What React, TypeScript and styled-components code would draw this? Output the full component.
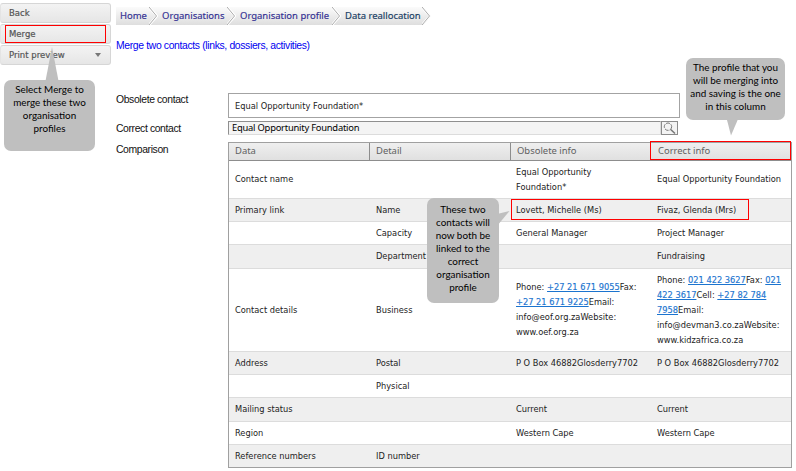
import React from 'react';
import styled, { createGlobalStyle, css } from 'styled-components';

const Global = createGlobalStyle`
  *, *::before, *::after { box-sizing: border-box; }
  body { margin: 0; background: #fff; overflow: hidden; }
`;

const Page = styled.div`
  position: relative;
  display: flex;
  width: 796px;
  height: 471px;
  background: #fff;
  color: #222;
  font: 8.28px/15px 'DejaVu Sans', sans-serif;
`;

const Sidebar = styled.nav`
  display: flex;
  flex-direction: column;
  gap: 1px;
  flex: none;
  width: 111px;
  padding-top: 3px;
`;

const MenuButton = styled.button`
  display: flex;
  align-items: center;
  justify-content: space-between;
  height: 20px;
  padding: 0 9px 0 8px;
  border: 1px solid #d6d6d6;
  border-left-color: #e4e4e4;
  border-radius: 3px;
  background: linear-gradient(#f3f3f3, #e6e6e6);
  color: #555;
  font: 8.5px/14px 'DejaVu Sans', sans-serif;
  -webkit-text-stroke: 0.2px #555;
`;

const Main = styled.main`
  display: flex;
  flex-direction: column;
  flex: 1;
  padding: 7px 4px 0 5px;
`;

const Crumbs = styled.div`
  display: flex;
  width: 315px;
  height: 18px;
`;

const Crumb = styled.a<{ $width: number; $current?: boolean }>`
  display: flex;
  align-items: center;
  justify-content: space-between;
  width: ${(p) => p.$width}px;
  padding-left: 4px;
  background: linear-gradient(#fbfbfb, #dedede);
  color: ${(p) => (p.$current ? '#173c63' : '#322f92')};
  font: 9.48px/18px 'Noto Sans', sans-serif;
  -webkit-text-stroke: 0.15px currentColor;
  white-space: nowrap;
  ${(p) => p.$current && css`clip-path: polygon(0 0, calc(100% - 8px) 0, 100% 50%, calc(100% - 8px) 100%, 0 100%);`}
`;

const Title = styled.h1`
  margin: 13px 0 0;
  color: #0000f0;
  font: 10.4px/15px 'Liberation Sans', sans-serif;
  letter-spacing: -0.355px;
`;

const Form = styled.div`
  display: grid;
  grid-template-columns: 112px 564px;
  grid-template-rows: 28px 21px 326px;
  margin-top: 40px;
`;

const Label = styled.label<{ $top: number }>`
  padding-top: ${(p) => p.$top}px;
  color: #111;
  font: 10.4px/14px 'Liberation Sans', sans-serif;
  letter-spacing: -0.38px;
`;

const ReadOnlyField = styled.div`
  width: 452px;
  height: 25px;
  padding: 5px 6px;
  border: 1px solid #a3a3a3;
`;

const Lookup = styled.div`
  display: flex;
  width: 450px;
  height: 14px;
`;

const LookupInput = styled.div`
  flex: 1;
  padding-left: 3px;
  border: 1px solid #dcdcdc;
  border-top: 1px solid #8f8f8f;
  border-left-color: #8f8f8f;
  background: #f4f4f4;
  color: #000;
  font: 9.4px/12px 'Noto Sans', sans-serif;
  letter-spacing: -0.23px;
`;

const LookupButton = styled.button`
  display: flex;
  align-items: center;
  justify-content: center;
  width: 17px;
  padding: 0;
  border: 1px solid #8b8b8b;
  background: #f3f3f3;
`;

const Table = styled.div`
  width: 564px;
  height: 326px;
  border: 1px solid #a0a0a0;
`;

const HeadRow = styled.div`
  display: grid;
  grid-template-columns: 141px 141px 140px 1fr;
  height: 18px;
  border-bottom: 1px solid #8d8d8d;
  background: linear-gradient(#efefef, #e0e0e0);
`;

const HeadCell = styled.div`
  padding-left: 6px;
  border-right: 1px solid #8d8d8d;
  color: #606060;
  font: 9.45px/16px 'Noto Sans', sans-serif;
  &:last-child { padding-left: 7px; border-right: 0; }
`;

const Row = styled.div<{ $height: number }>`
  display: grid;
  grid-template-columns: 141px 140px 141px 1fr;
  align-items: center;
  height: ${(p) => p.$height}px;
  border-bottom: 1px solid #dcdcdc;
  &:nth-child(odd) { background: #efefef; }
  &:last-child { border-bottom: 0; }
`;

const Cell = styled.div`
  padding-left: 6px;
  white-space: nowrap;
`;

const Phone = styled.a`
  color: #1b74cf;
  text-decoration: underline;
  -webkit-text-stroke: 0.15px currentColor;
`;

const Callout = styled.aside<{ $x: number; $y: number; $w: number; $h: number; $top?: number }>`
  position: absolute;
  left: ${(p) => p.$x}px;
  top: ${(p) => p.$y}px;
  width: ${(p) => p.$w}px;
  height: ${(p) => p.$h}px;
  padding-top: ${(p) => p.$top ?? 3}px;
  border-radius: 7px;
  background: #bfbfbf;
  color: #000;
  font: 9.9px/13px Lato, sans-serif;
  text-align: center;
  white-space: nowrap;
`;

const Pointer = styled.svg<{ $x: number; $y: number }>`
  position: absolute;
  left: ${(p) => p.$x}px;
  top: ${(p) => p.$y}px;
  fill: #bfbfbf;
`;

const Highlight = styled.div<{ $x: number; $y: number; $w: number; $h: number }>`
  position: absolute;
  left: ${(p) => p.$x}px;
  top: ${(p) => p.$y}px;
  width: ${(p) => p.$w}px;
  height: ${(p) => p.$h}px;
  border: 1px solid #f00;
  pointer-events: none;
`;

const crumbs = [
  { text: 'Home', width: 42 },
  { text: 'Organisations', width: 78 },
  { text: 'Organisation profile', width: 105 },
  { text: 'Data reallocation', width: 90, current: true },
];

const obsoleteDetails = (
  <>
    Phone: <Phone>+27 21 671 9055</Phone>Fax:<br />
    <Phone>+27 21 671 9225</Phone>Email:<br />
    info@eof.org.zaWebsite:<br />
    www.oef.org.za
  </>
);

const correctDetails = (
  <>
    Phone: <Phone>021 422 3627</Phone>Fax: <Phone>021</Phone><br />
    <Phone>422 3617</Phone>Cell: <Phone>+27 82 784</Phone><br />
    <Phone>7958</Phone>Email:<br />
    info@devman3.co.zaWebsite:<br />
    www.kidzafrica.co.za
  </>
);

const rows: { height: number; cells: React.ReactNode[] }[] = [
  { height: 38, cells: ['Contact name', '', <>Equal Opportunity<br />Foundation*</>, 'Equal Opportunity Foundation'] },
  { height: 23, cells: ['Primary link', 'Name', 'Lovett, Michelle (Ms)', 'Fivaz, Glenda (Mrs)'] },
  { height: 23, cells: ['', 'Capacity', 'General Manager', 'Project Manager'] },
  { height: 24, cells: ['', 'Department', '', 'Fundraising'] },
  { height: 83, cells: ['Contact details', 'Business', obsoleteDetails, correctDetails] },
  { height: 23, cells: ['Address', 'Postal', 'P O Box 46882Glosderry7702', 'P O Box 46882Glosderry7702'] },
  { height: 23, cells: ['', 'Physical', '', ''] },
  { height: 24, cells: ['Mailing status', '', 'Current', 'Current'] },
  { height: 23, cells: ['Region', '', 'Western Cape', 'Western Cape'] },
  { height: 22, cells: ['Reference numbers', 'ID number', '', ''] },
];

export default function App() {
  return (
    <Page>
      <Global />
      <Sidebar>
        <MenuButton>Back</MenuButton>
        <MenuButton>Merge</MenuButton>
        <MenuButton>
          Print preview
          <svg width="6" height="4"><path d="M0 0h6L3 4z" fill="#777" /></svg>
        </MenuButton>
      </Sidebar>
      <Main>
        <Crumbs>
          {crumbs.map((c) => (
            <Crumb key={c.text} $width={c.width} $current={c.current}>
              {c.text}
              <svg width="9" height="18" fill="none">
                <path d="M0 0L8 9L0 18" stroke="#fff" strokeWidth="2.5" />
                <path d="M0 0L7.5 9L0 18" stroke="#aaa" />
              </svg>
            </Crumb>
          ))}
        </Crumbs>
        <Title>Merge two contacts (links, dossiers, activities)</Title>
        <Form>
          <Label $top={0}>Obsolete contact</Label>
          <ReadOnlyField>Equal Opportunity Foundation*</ReadOnlyField>
          <Label $top={1}>Correct contact</Label>
          <Lookup>
            <LookupInput>Equal Opportunity Foundation</LookupInput>
            <LookupButton>
              <svg width="13" height="12" fill="none" stroke="#777">
                <circle cx="5" cy="4.7" r="3.7" strokeDasharray="4 1" />
                <path d="M7.7 7.5L12 11.5" strokeWidth="1.5" />
              </svg>
            </LookupButton>
          </Lookup>
          <Label $top={1}>Comparison</Label>
          <Table>
            <HeadRow>
              {['Data', 'Detail', 'Obsolete info', 'Correct info'].map((t) => (
                <HeadCell key={t}>{t}</HeadCell>
              ))}
            </HeadRow>
            {rows.map((r, i) => (
              <Row key={i} $height={r.height}>
                {r.cells.map((c, j) => (
                  <Cell key={j}>{c}</Cell>
                ))}
              </Row>
            ))}
          </Table>
        </Form>
      </Main>

      <Highlight $x={5} $y={25} $w={101} $h={18} />
      <Highlight $x={650} $y={141} $w={141} $h={19} />
      <Highlight $x={511} $y={199} $w={238} $h={21} />

      <Pointer $x={45} $y={47} width="14" height="34"><path d="M7 0L13.5 34H0.5z" /></Pointer>
      <Callout $x={4} $y={80} $w={91} $h={71}>
        Select Merge to<br />merge these two<br />organisation<br />profiles
      </Callout>

      <Pointer $x={726} $y={118} width="13" height="18"><path d="M0.5 0H12.5L5 17.5z" /></Pointer>
      <Callout $x={686} $y={58} $w={99} $h={62}>
        The profile that you<br />will be merging into<br />and saving is the one<br />in this column
      </Callout>

      <Pointer $x={497} $y={210} width="13" height="16"><path d="M12.5 1L0 4V16z" /></Pointer>
      <Callout $x={427} $y={198} $w={72} $h={105} $top={5}>
        These two<br />contacts will<br />now both be<br />linked to the<br />correct<br />organisation<br />profile
      </Callout>
    </Page>
  );
}
